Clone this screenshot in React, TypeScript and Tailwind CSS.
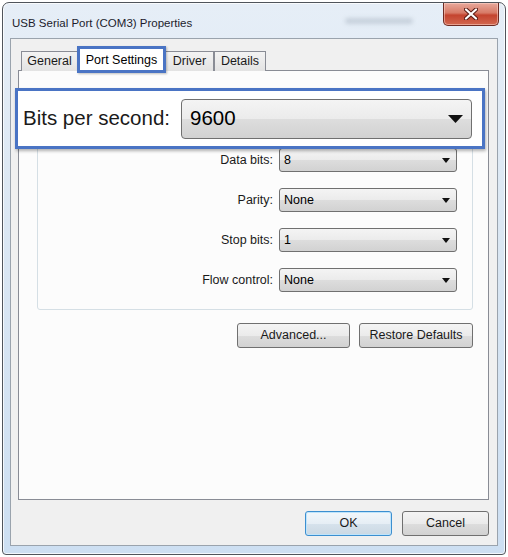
import React from "react";

const FONT = "font-['Liberation_Sans',Arial,sans-serif]";
const AERO =
  "bg-[linear-gradient(to_bottom,#f4f4f4_0%,#ebebeb_50%,#dddddd_51%,#d2d2d2_100%)]";

function Arrow({ big = false }: { big?: boolean }) {
  return big ? (
    <svg width="15" height="8" viewBox="0 0 15 8">
      <path d="M0 0 H15 L7.5 8 Z" fill="#111" />
    </svg>
  ) : (
    <svg width="8" height="5" viewBox="0 0 8 5">
      <path d="M0 0 H8 L4 5 Z" fill="#111" />
    </svg>
  );
}

function Combo({ value }: { value: string }) {
  return (
    <div
      className={`flex h-[24px] w-[178px] items-center justify-between rounded-[3px] border border-[#707070] pl-[4px] pr-[6px] text-[12.5px] text-black ${AERO}`}
    >
      <span>{value}</span>
      <Arrow />
    </div>
  );
}

function Row({ label, value }: { label: string; value: string }) {
  return (
    <div className="flex items-center justify-end gap-[6px] pr-[15px]">
      <span className="text-[12.5px] text-[#1a1a1a]">{label}</span>
      <Combo value={value} />
    </div>
  );
}

function Btn({ label, w, def = false }: { label: string; w: string; def?: boolean }) {
  return (
    <div
      className={`flex h-[25px] ${w} items-center justify-center rounded-[3px] border text-[12.5px] text-[#1a1a1a] ${
        def
          ? "border-[#3c8fd0] shadow-[inset_0_0_0_1px_#bfe4fb] bg-[linear-gradient(to_bottom,#f2f7fb_0%,#e6eef5_50%,#d6e2ec_51%,#cbd8e3_100%)]"
          : `border-[#707070] ${AERO}`
      }`}
    >
      {label}
    </div>
  );
}

function Tab({ label, w, active = false }: { label: string; w: string; active?: boolean }) {
  if (active) {
    return (
      <div
        className={`relative z-10 -mx-[1px] flex h-[24px] ${w} items-start justify-center border border-b-0 border-[#898c95] bg-white pt-[3px] text-[12.5px] text-black`}
      >
        {label}
        <div className="pointer-events-none absolute -left-[1px] -right-[1px] -top-[2px] bottom-[-2px] border-[3px] border-[#4a74c4] shadow-[1px_1px_2px_rgba(0,0,0,0.25)]" />
      </div>
    );
  }
  return (
    <div
      className={`flex h-[20px] ${w} items-center justify-center border border-b-0 border-[#898c95] bg-[linear-gradient(to_bottom,#f3f3f3,#e3e3e3)] text-[12.5px] text-[#1a1a1a]`}
    >
      {label}
    </div>
  );
}

export default function App() {
  return (
    <div className={`relative h-[557px] w-[508px] bg-white pl-[2px] pt-[2px] ${FONT}`}>
      {/* window frame */}
      <div className="flex h-[553px] w-[504px] flex-col rounded-b-[4px] rounded-t-[7px] border border-[#50555c] bg-[linear-gradient(to_bottom,#e6eef7_0%,#dbe7f3_40%,#cddff2_100%)] shadow-[inset_0_0_0_1px_rgba(255,255,255,0.75)]">
        {/* title bar */}
        <div className="relative flex h-[35px] items-start justify-between pr-[6px]">
          <span className="pl-[9px] pt-[12px] text-[11.5px] text-[#1c1c2c]">
            USB Serial Port (COM3) Properties
          </span>
          <div className="absolute left-[342px] top-[15px] h-[6px] w-[68px] rounded-full bg-[#9aa6b4] opacity-40 blur-[2px]" />
          <div className="flex h-[23px] w-[56px] items-center justify-center rounded-b-[5px] border border-t-0 border-[#6e2a22] bg-[linear-gradient(to_bottom,#e8a99c_0%,#d77a66_45%,#c4442f_55%,#d2674f_100%)] shadow-[inset_0_0_0_1px_rgba(255,220,210,0.5)]">
            <svg width="14" height="12" viewBox="0 0 14 12">
              <path d="M2 1.5 L12 10.5 M12 1.5 L2 10.5" stroke="#5b1c14" strokeWidth="4.2" strokeLinecap="round" />
              <path d="M2 1.5 L12 10.5 M12 1.5 L2 10.5" stroke="#ffffff" strokeWidth="2.2" strokeLinecap="round" />
            </svg>
          </div>
        </div>

        {/* client area */}
        <div className="mx-[7px] mb-[8px] flex flex-1 flex-col border border-[#9aa3ad] bg-[#f0f0f0] pl-[7px] pr-[8px] pt-[8px]">
          {/* tab strip */}
          <div className="relative z-10 -mb-px flex h-[24px] items-end pl-[3px]">
            <Tab label="General" w="w-[57px]" />
            <Tab label="Port Settings" w="w-[89px]" active />
            <Tab label="Driver" w="w-[49px]" />
            <Tab label="Details" w="w-[52px]" />
          </div>

          {/* tab panel */}
          <div className="flex h-[430px] flex-col border border-[#898c95] bg-[#fcfcfc] pl-[18px] pr-[15px]">
            <div className="mt-[21px] flex flex-col gap-[16px] rounded-[3px] border border-[#d5dfe5] pb-[17px] pt-[15px]">
              {/* bits-per-second row sits under the callout */}
              <div className="h-[24px]" />
              <Row label="Data bits:" value="8" />
              <Row label="Parity:" value="None" />
              <Row label="Stop bits:" value="1" />
              <Row label="Flow control:" value="None" />
            </div>
            <div className="mt-[13px] flex justify-end gap-[9px]">
              <Btn label="Advanced..." w="w-[113px]" />
              <Btn label="Restore Defaults" w="w-[114px]" />
            </div>
          </div>

          {/* dialog buttons */}
          <div className="mt-[11px] flex justify-end gap-[10px]">
            <Btn label="OK" w="w-[87px]" def />
            <Btn label="Cancel" w="w-[87px]" />
          </div>
        </div>
      </div>

      {/* callout: enlarged Bits per second */}
      <div className="absolute left-[15px] top-[88px] flex h-[61px] w-[470px] items-center border-[3px] border-[#4a74c4] bg-white pl-[5px] shadow-[1px_2px_3px_rgba(0,0,0,0.3)]">
        <span className="w-[158px] text-[20.5px] text-[#1a1a1a]">Bits per second:</span>
        <div
          className={`flex h-[40px] w-[291px] items-center justify-between rounded-[4px] border border-[#707070] pl-[8px] pr-[8px] text-[20.5px] text-black ${AERO}`}
        >
          <span>9600</span>
          <Arrow big />
        </div>
      </div>
    </div>
  );
}
